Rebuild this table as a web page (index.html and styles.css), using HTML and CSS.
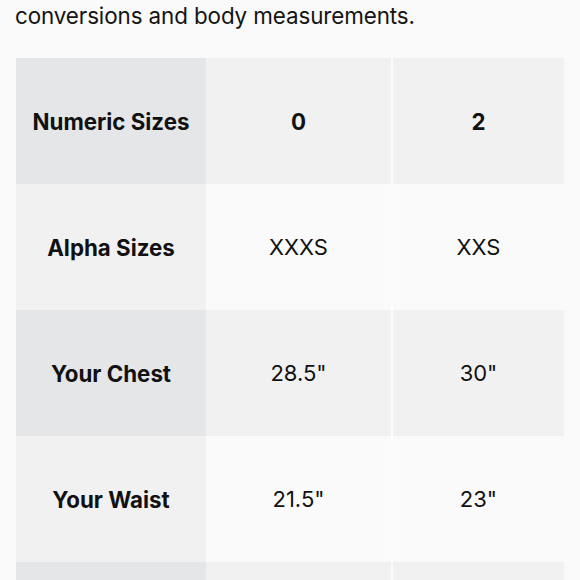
FILE: index.html
```html
<!DOCTYPE html>
<html lang="en">
<head>
<meta charset="utf-8">
<link rel="stylesheet" href="styles.css">
</head>
<body>
<main class="page">
  <p class="intro">conversions and body measurements.</p>
  <div class="size-table">
    <div class="cell label dark">Numeric Sizes</div>
    <div class="cell head mid sep">0</div>
    <div class="cell head mid">2</div>

    <div class="cell label mid">Alpha Sizes</div>
    <div class="cell light sep">XXXS</div>
    <div class="cell light">XXS</div>

    <div class="cell label dark">Your Chest</div>
    <div class="cell mid sep">28.5"</div>
    <div class="cell mid">30"</div>

    <div class="cell label mid">Your Waist</div>
    <div class="cell light sep">21.5"</div>
    <div class="cell light">23"</div>

    <div class="cell label dark"></div>
    <div class="cell mid sep"></div>
    <div class="cell mid"></div>
  </div>
</main>
</body>
</html>
```
FILE: styles.css
```css
html, body {
  margin: 0;
  padding: 0;
  background: #fafafa;
}
body {
  font-family: Inter, "Liberation Sans", sans-serif;
  color: #141414;
  overflow: hidden;
  height: 580px;
}
.page {
  padding: 0 16px 0 15px;
}
.intro {
  margin: 0;
  font-size: 22.4px;
  line-height: 30px;
  letter-spacing: -0.1px;
  padding-top: 1px;
}
.size-table {
  margin-top: 27px;
  margin-left: 1px;
  display: grid;
  grid-template-columns: 190px 187px 171px;
  grid-auto-rows: 126px;
  width: 548px;
}
.cell {
  display: flex;
  align-items: center;
  justify-content: center;
  font-size: 22px;
  color: #111;
}
.label, .head {
  font-weight: 700;
  font-size: 22.3px;
}
.dark { background: #e5e6e8; }
.mid { background: #f1f1f1; }
.light { background: #fafafa; }
.sep {
  border-right: 2px solid #fcfcfc;
}
```
